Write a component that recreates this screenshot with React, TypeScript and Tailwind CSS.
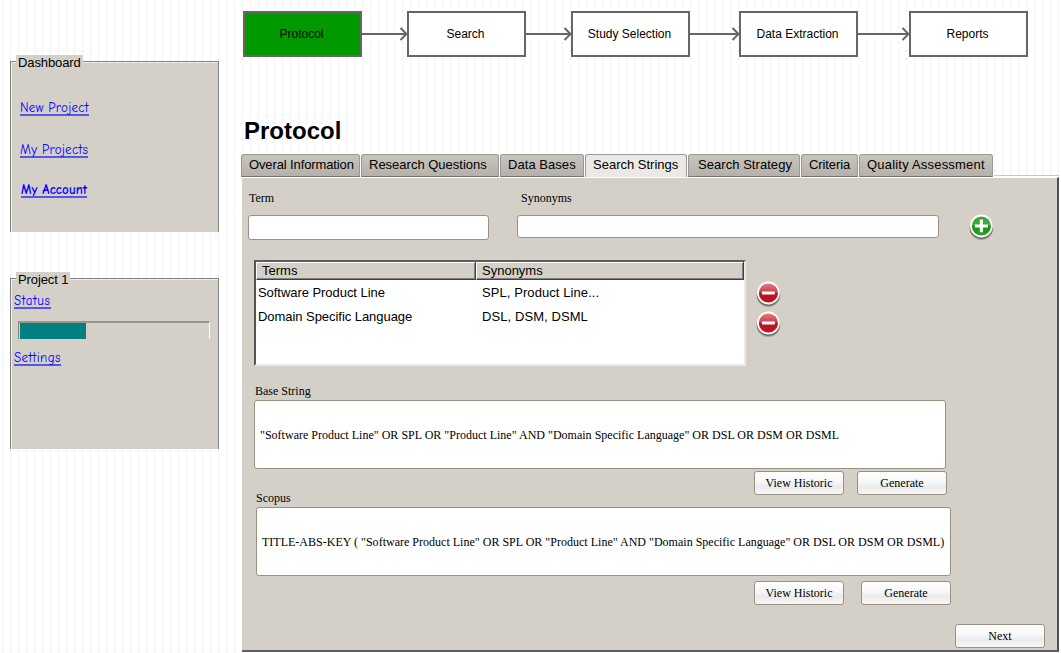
import { useId } from "react";
import type { ReactNode } from "react";

const tabs = [
  { label: "Overal Information", box: "w-[119px] pl-[7px]", tracking: "tracking-[-0.12px]" },
  { label: "Research Questions", box: "w-[138px] pl-[7px]", tracking: "tracking-[0px]" },
  { label: "Data Bases", box: "w-[84px] pl-[7px]", tracking: "tracking-[0.05px]" },
  { label: "Search Strings", box: "w-[102px] pl-[7px]", tracking: "tracking-[0px]", active: true },
  { label: "Search Strategy", box: "w-[112px] pl-[9px]", tracking: "tracking-[0.05px]" },
  { label: "Criteria", box: "w-[57px] pl-[7px]", tracking: "tracking-[-0.1px]" },
  { label: "Quality Assessment", box: "w-[134px] pl-[7px]", tracking: "tracking-[0.2px]" },
];

const terms = [
  ["Software Product Line", "SPL, Product Line..."],
  ["Domain Specific Language", "DSL, DSM, DSML"],
];

function Step({ children, active }: { children: ReactNode; active?: boolean }) {
  return (
    <div
      className={`flex h-[46px] w-[119px] shrink-0 items-center justify-center border-2 border-[#666] pr-[2px] text-[12px] ${
        active ? "bg-[#009900]" : "bg-white"
      }`}
    >
      {children}
    </div>
  );
}

function Arrow({ width }: { width: number }) {
  return (
    <svg width={width} height="16" className="shrink-0 overflow-visible" fill="none" stroke="#666" strokeWidth="2">
      <path d={`M0 8H${width}M${width - 6.5} 2L${width - 0.5} 8L${width - 6.5} 14`} />
    </svg>
  );
}

function Group({ title, children }: { title: string; children: ReactNode }) {
  return (
    <section className="h-[171px] w-[209px] border-x border-t border-[#808080] bg-[#d4d0c8] shadow-[inset_1px_1px_0_#f0eeea]">
      <h2 className="-mt-[7px] ml-[5px] h-[16px] w-fit bg-[#d4d0c8] px-[2px] text-[13px] leading-[16px] tracking-[-0.1px]">
        {title}
      </h2>
      {children}
    </section>
  );
}

function SideLink({ children, className }: { children: ReactNode; className: string }) {
  return (
    <a
      className={`block h-[16px] w-fit whitespace-nowrap border-b-2 border-[#5a57e8] font-['Comic_Sans_MS','Comic_Neue','Open_Sans',sans-serif] text-[13px] leading-[16px] text-[#0000ff] ${className}`}
    >
      {children}
    </a>
  );
}

function Button({ children, className = "" }: { children: ReactNode; className?: string }) {
  return (
    <button
      className={`h-[24px] w-[90px] rounded-[3px] border border-[#9b9182] bg-[linear-gradient(#ffffff,#f7f7f7_45%,#ebebeb_65%,#f8f8f8)] text-center text-[12px] leading-[22px] ${className}`}
    >
      {children}
    </button>
  );
}

function RoundIcon({ kind, className = "" }: { kind: "plus" | "minus"; className?: string }) {
  const id = useId();
  const plus = kind === "plus";
  return (
    <svg width="26" height="27" viewBox="0 0 26 27" className={`shrink-0 ${className}`}>
      <defs>
        <linearGradient id={id} x1="0" y1="0" x2="0" y2="1">
          <stop offset="0" stopColor={plus ? "#3aa53a" : "#e08088"} />
          <stop offset="0.48" stopColor={plus ? "#40ab3e" : "#cc3946"} />
          <stop offset="0.52" stopColor={plus ? "#159310" : "#bd1020"} />
          <stop offset="1" stopColor={plus ? "#24a61c" : "#c01424"} />
        </linearGradient>
      </defs>
      <circle cx="13.4" cy="14.3" r="11.9" fill="#000" opacity="0.18" />
      <circle cx="13.4" cy="13.4" r="11.6" fill="#000" opacity="0.38" />
      <circle cx="13.4" cy="12" r="11.4" fill="#fff" />
      <circle cx="13.4" cy="12" r="9.6" fill={`url(#${id})`} />
      {plus ? (
        <path d="M11.8 5.6h3.2v4.8h4.9v3.2h-4.9v4.7h-3.2v-4.7H6.9v-3.2h4.9z" fill="#fff" />
      ) : (
        <path d="M7 10.5h12.8v3H7z" fill="#fff" />
      )}
    </svg>
  );
}

export default function App() {
  return (
    <div className="flex h-[653px] w-[1061px] overflow-hidden bg-white bg-[conic-gradient(from_270deg_at_1px_2px,#e4e4e4_90deg,transparent_0)] bg-[length:8px_8px] bg-[position:2px_2px] font-['Liberation_Sans',Arial,sans-serif] text-black">
      <aside className="flex w-[241px] shrink-0 flex-col gap-[46px] pl-[10px] pt-[61px]">
        <Group title="Dashboard">
          <SideLink className="ml-[9px] mt-[29px] tracking-[0.28px]">New Project</SideLink>
          <SideLink className="ml-[9px] mt-[26px] tracking-[0.28px]">My Projects</SideLink>
          <SideLink className="ml-[10px] mt-[24px] border-[#2a28f0] font-bold tracking-[0.1px]">My Account</SideLink>
        </Group>
        <Group title="Project 1">
          <SideLink className="ml-[3px] mt-[5px] tracking-[0.6px]">Status</SideLink>
          <div className="ml-[7px] mt-[12px] h-[18px] w-[192px] border-l border-r border-t-2 border-l-[#808080] border-r-white border-t-[#999690] pl-px">
            <div className="h-[16px] w-[66px] bg-[#008080]" />
          </div>
          <SideLink className="ml-[3px] mt-[11px] tracking-[0.4px]">Settings</SideLink>
        </Group>
      </aside>

      <main className="flex w-[820px] shrink-0 flex-col">
        <nav className="ml-[2px] mt-[11px] flex h-[46px] items-center">
          <Step active>Protocol</Step>
          <Arrow width={45} />
          <Step>Search</Step>
          <Arrow width={45} />
          <Step>Study Selection</Step>
          <Arrow width={49} />
          <Step>Data Extraction</Step>
          <Arrow width={51} />
          <Step>Reports</Step>
        </nav>

        <h1 className="ml-[3px] mt-[60px] h-[28px] text-[24px] font-bold leading-[28px]">Protocol</h1>

        <div className="mt-[9px] flex h-[23px] gap-px">
          {tabs.map((t) => (
            <div
              key={t.label}
              className={`h-[23px] shrink-0 whitespace-nowrap rounded-t-[3px] border border-[#999] text-[13px] leading-[20px] ${
                t.active ? "border-b-0 bg-[#ebe9e5]" : "border-b-[#77736d] bg-[linear-gradient(#c9c5bd,#b5b1aa)]"
              } ${t.box} ${t.tracking}`}
            >
              {t.label}
            </div>
          ))}
          <div className="mb-px w-[65px] self-end border-t border-[#c8c8c8]" />
        </div>

        <div className="ml-px flex h-[475px] w-[817px] flex-col border-b-2 border-r-2 border-t border-b-[#606060] border-r-[#505050] border-t-white bg-[#d4d0c8] font-['Liberation_Serif','Times_New_Roman',serif] text-[12px] leading-[14px]">
          <div className="flex h-[82px]">
            <div className="ml-[6px] mt-[13px] w-[269px]">
              <label className="ml-px block">Term</label>
              <div className="mt-[10px] h-[25px] w-[241px] rounded-[3px] border border-[#9b9182] bg-white" />
            </div>
            <div className="mt-[13px] w-[422px]">
              <label className="ml-[4px] block">Synonyms</label>
              <div className="mt-[10px] h-[23px] w-[422px] rounded-[3px] border border-[#9b9182] bg-white" />
            </div>
            <RoundIcon kind="plus" className="ml-[29px] mt-[36px]" />
          </div>

          <div className="flex h-[106px] pl-[12px]">
            <div className="h-[106px] w-[492px] border-2 border-b-[#eceae6] border-l-[#55534f] border-r-[#eceae6] border-t-[#605e5a] bg-white font-['Liberation_Sans',Arial,sans-serif] text-[13px]">
              <div className="flex h-[18px] w-[488px] bg-[#d4d0c8] leading-[17px]">
                <div className="w-[220px] border-b border-r border-[#404040] border-l border-l-white pl-[5px] shadow-[inset_0_1px_0_white,inset_-1px_-1px_0_#808080]">
                  Terms
                </div>
                <div className="w-[268px] border-b border-r border-[#404040] border-l border-l-white pl-[5px] shadow-[inset_0_1px_0_white,inset_-1px_-1px_0_#808080]">
                  Synonyms
                </div>
              </div>
              <div className="pt-px">
                {terms.map(([term, synonyms]) => (
                  <div key={term} className="flex h-[24px] leading-[24px]">
                    <div className="w-[220px] pl-[2px] tracking-[-0.05px]">{term}</div>
                    <div className="pl-[6px] tracking-[0.08px]">{synonyms}</div>
                  </div>
                ))}
              </div>
            </div>
            <div className="ml-[9px] mt-[21px] flex flex-col gap-[3px]">
              <RoundIcon kind="minus" />
              <RoundIcon kind="minus" />
            </div>
          </div>

          <label className="ml-[13px] mt-[18px] block">Base String</label>
          <div className="ml-[12px] mt-[2px] flex h-[69px] w-[692px] shrink-0 items-center whitespace-pre rounded-[3px] border border-[#9b9182] bg-white pl-[5px] tracking-[0.01px]">
            {'"Software Product Line" OR SPL OR "Product Line" AND "Domain Specific Language" OR DSL OR DSM OR DSML'}
          </div>
          <div className="ml-[512px] mt-[2px] flex gap-[13px]">
            <Button>View Historic</Button>
            <Button>Generate</Button>
          </div>
          <label className="-mt-[4px] ml-[14px] block">Scopus</label>
          <div className="ml-[14px] mt-[2px] flex h-[69px] w-[695px] shrink-0 items-center whitespace-pre rounded-[3px] border border-[#9b9182] bg-white pl-[5px] tracking-[0.01px]">
            {'TITLE-ABS-KEY ( "Software Product Line" OR SPL OR "Product Line" AND "Domain Specific Language" OR DSL OR DSM OR DSML)'}
          </div>
          <div className="ml-[512px] mt-[5px] flex gap-[17px]">
            <Button>View Historic</Button>
            <Button>Generate</Button>
          </div>
          <Button className="ml-[713px] mt-[19px] shrink-0">Next</Button>
        </div>
      </main>
    </div>
  );
}
